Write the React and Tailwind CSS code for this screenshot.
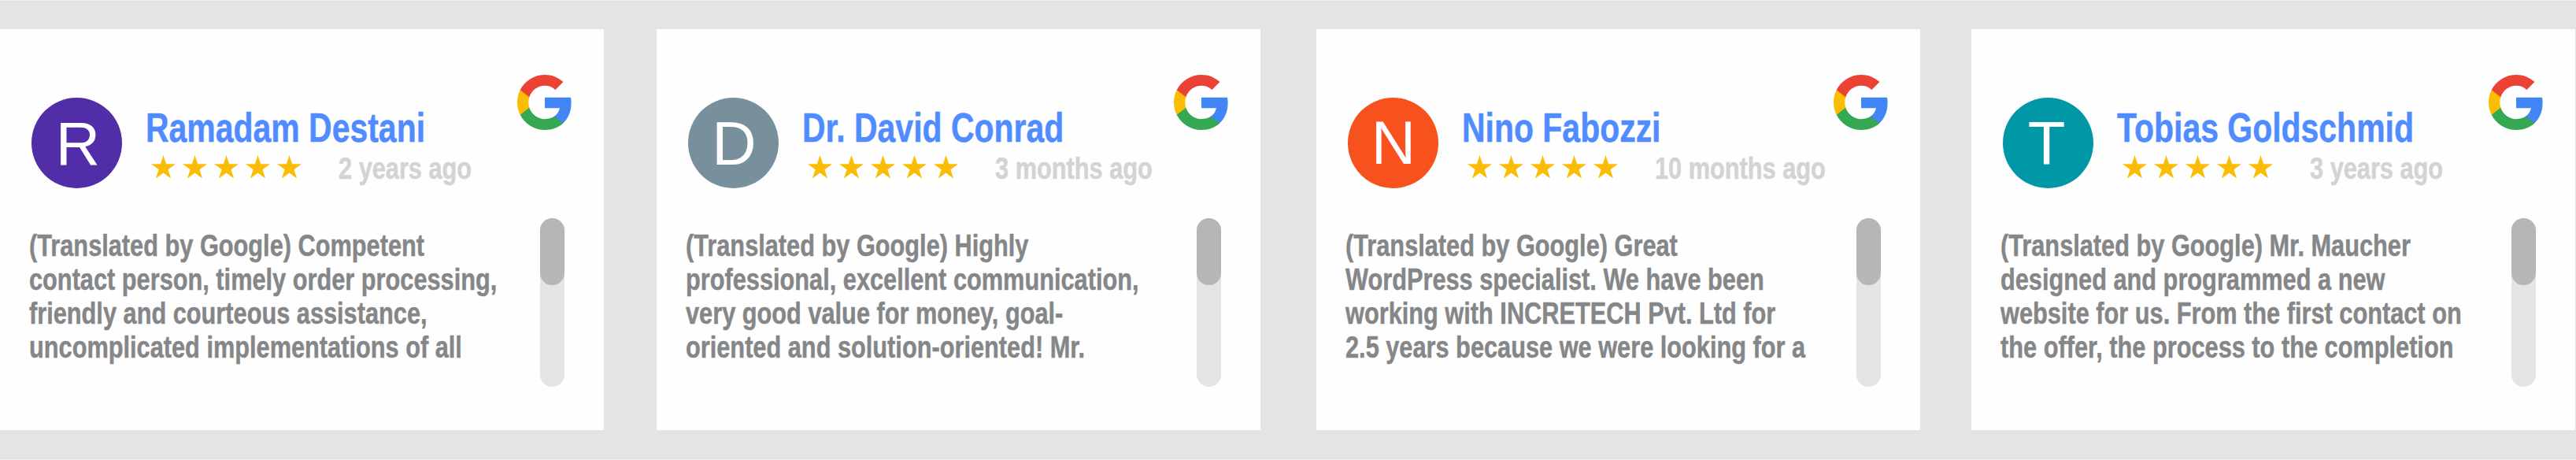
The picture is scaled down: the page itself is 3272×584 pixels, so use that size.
const reviews = [
  { name: "Ramadam Destani", initial: "R", color: "bg-[#512da8]", nudge: "pl-[3px]", time: "2 years ago", lines: ["(Translated by Google) Competent", "contact person, timely order processing,", "friendly and courteous assistance,", "uncomplicated implementations of all"] },
  { name: "Dr. David Conrad", initial: "D", color: "bg-[#78909c]", nudge: "pl-[2px]", time: "3 months ago", lines: ["(Translated by Google) Highly", "professional, excellent communication,", "very good value for money, goal-", "oriented and solution-oriented! Mr."] },
  { name: "Nino Fabozzi", initial: "N", color: "bg-[#f7511e]", nudge: "pl-[1px] pb-[2px]", time: "10 months ago", lines: ["(Translated by Google) Great", "WordPress specialist. We have been", "working with INCRETECH Pvt. Ltd for", "2.5 years because we were looking for a"] },
  { name: "Tobias Goldschmid", initial: "T", color: "bg-[#0097a7]", nudge: "pr-[4px]", time: "3 years ago", lines: ["(Translated by Google) Mr. Maucher", "designed and programmed a new", "website for us. From the first contact on", "the offer, the process to the completion"] },
];

function GoogleLogo() {
  return (
    <svg viewBox="0 0 533.5 544.3" className="h-[70px] w-[68.6px]">
      <path fill="#4285f4" d="M533.5 278.4c0-18.5-1.5-37.1-4.7-55.3H272.1v104.8h147c-6.1 33.8-25.7 63.7-54.4 82.7v68h87.7c51.5-47.4 81.1-117.4 81.1-200.2z" />
      <path fill="#34a853" d="M272.1 544.3c73.4 0 135.3-24.1 180.4-65.7l-87.7-68c-24.4 16.6-55.9 26-92.6 26-71 0-131.2-47.9-152.8-112.3H28.9v70.1c46.2 91.9 140.3 149.9 243.2 149.9z" />
      <path fill="#fbbc04" d="M119.3 324.3c-11.4-33.8-11.4-70.4 0-104.2V150H28.9c-38.6 76.9-38.6 167.5 0 244.4l90.4-70.1z" />
      <path fill="#ea4335" d="M272.1 107.7c38.8-.6 76.3 14 104.4 40.8l77.7-77.7C405 24.6 339.7-.8 272.1 0 169.2 0 75.1 58 28.9 150l90.4 70.1c21.5-64.5 81.8-112.4 152.8-112.4z" />
    </svg>
  );
}

function Star() {
  return (
    <svg viewBox="-15.5 -16.3 31 29.5" className="h-[29.5px] w-[31px]">
      <polygon fill="#fbbc05" points="0,-16.3 3.66,-5.04 15.5,-5.04 5.92,1.92 9.58,13.19 0,6.23 -9.58,13.19 -5.92,1.92 -15.5,-5.04 -3.66,-5.04" />
    </svg>
  );
}

function Card({ r }) {
  return (
    <article className="flex h-[509px] w-[767px] shrink-0 flex-col bg-[#fefefe] font-['Liberation_Sans',sans-serif] font-bold">
      <header className="flex h-[203px] pl-[40px]">
        <div className={"mt-[87px] flex h-[115px] w-[115px] items-center justify-center rounded-full text-[78px] leading-none font-normal text-white " + r.color + " " + r.nudge}>{r.initial}</div>
        <div className="ml-[30px] flex w-[472px] flex-col pt-[97px]">
          <h2 className="h-[63px] w-[472px] origin-left scale-x-[0.78] text-[52.5px] leading-[56px] whitespace-nowrap text-[#508cff] [-webkit-text-stroke:0.5px_#508cff]">{r.name}</h2>
          <div className="flex items-start">
            <div className="ml-[7px] flex gap-[9.1px]">{[0, 1, 2, 3, 4].map((i) => <Star key={i} />)}</div>
            <span className="-mt-[3px] ml-[47px] origin-left scale-x-[0.788] text-[39px] leading-[40px] whitespace-nowrap text-[#d2d3d4] [-webkit-text-stroke:0.5px_#d2d3d4]">{r.time}</span>
          </div>
        </div>
        <div className="mt-[58px]"><GoogleLogo /></div>
      </header>
      <div className="flex">
        <div className="mt-[51px] ml-[37px] w-[649px] origin-left scale-x-[0.788] text-[39px] leading-[42.9px] whitespace-nowrap text-[#858688] [-webkit-text-stroke:0.5px_#858688]">
          {r.lines.map((l) => <p key={l}>{l}</p>)}
        </div>
        <div className="mt-[37px] h-[214px] w-[31px] rounded-full bg-[#e4e4e4]"><div className="h-[85px] rounded-full bg-[#b6b6b6]" /></div>
      </div>
    </article>
  );
}

export default function App() {
  return (
    <main className="h-[584px] w-[3272px] overflow-hidden border-y border-[#f3f3f3] bg-[#e4e4e4] pt-[36px]">
      <div className="grid grid-cols-[834px_838px_832px_768px]">
        {reviews.map((r) => <Card key={r.name} r={r} />)}
      </div>
    </main>
  );
}
